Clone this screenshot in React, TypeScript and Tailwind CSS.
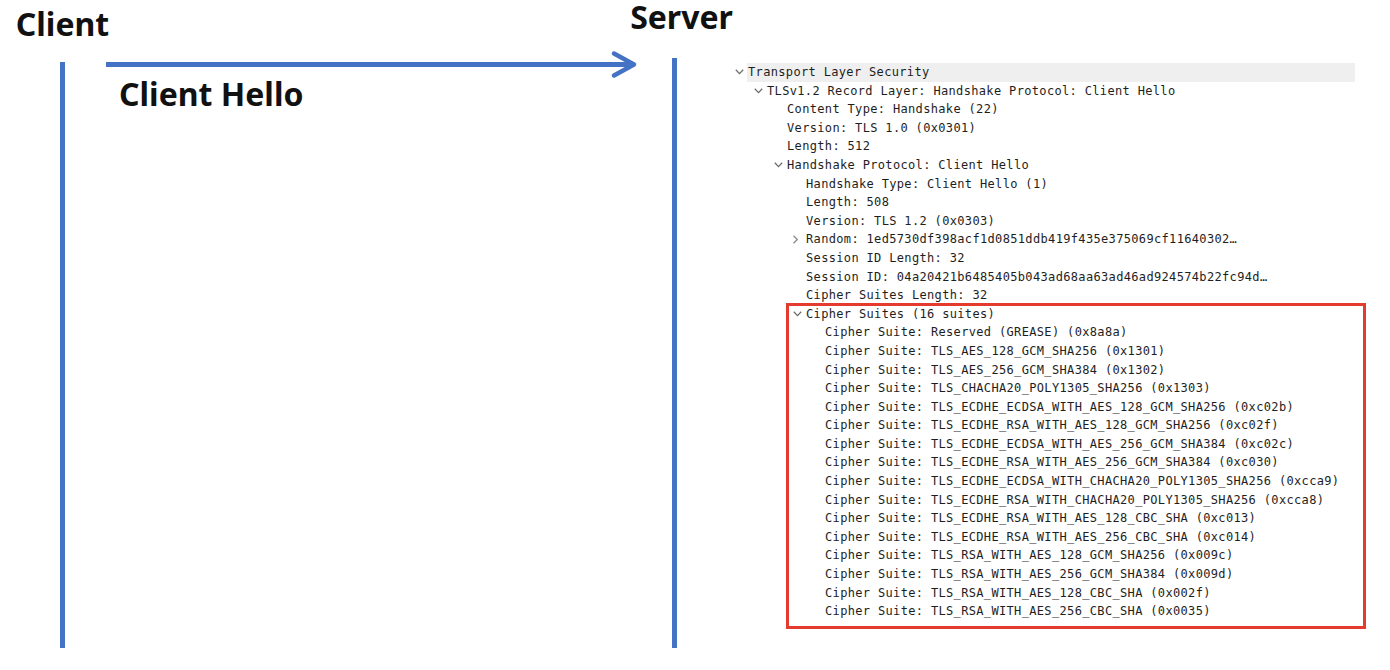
import React from "react";

type Row = { level: number; text: string; chevron?: "down" | "right"; hl?: boolean };

const rows: Row[] = [
  { level: 0, text: "Transport Layer Security", chevron: "down", hl: true },
  { level: 1, text: "TLSv1.2 Record Layer: Handshake Protocol: Client Hello", chevron: "down" },
  { level: 2, text: "Content Type: Handshake (22)" },
  { level: 2, text: "Version: TLS 1.0 (0x0301)" },
  { level: 2, text: "Length: 512" },
  { level: 2, text: "Handshake Protocol: Client Hello", chevron: "down" },
  { level: 3, text: "Handshake Type: Client Hello (1)" },
  { level: 3, text: "Length: 508" },
  { level: 3, text: "Version: TLS 1.2 (0x0303)" },
  { level: 3, text: "Random: 1ed5730df398acf1d0851ddb419f435e375069cf11640302…", chevron: "right" },
  { level: 3, text: "Session ID Length: 32" },
  { level: 3, text: "Session ID: 04a20421b6485405b043ad68aa63ad46ad924574b22fc94d…" },
  { level: 3, text: "Cipher Suites Length: 32" },
];

const suites = [
  "Reserved (GREASE) (0x8a8a)",
  "TLS_AES_128_GCM_SHA256 (0x1301)",
  "TLS_AES_256_GCM_SHA384 (0x1302)",
  "TLS_CHACHA20_POLY1305_SHA256 (0x1303)",
  "TLS_ECDHE_ECDSA_WITH_AES_128_GCM_SHA256 (0xc02b)",
  "TLS_ECDHE_RSA_WITH_AES_128_GCM_SHA256 (0xc02f)",
  "TLS_ECDHE_ECDSA_WITH_AES_256_GCM_SHA384 (0xc02c)",
  "TLS_ECDHE_RSA_WITH_AES_256_GCM_SHA384 (0xc030)",
  "TLS_ECDHE_ECDSA_WITH_CHACHA20_POLY1305_SHA256 (0xcca9)",
  "TLS_ECDHE_RSA_WITH_CHACHA20_POLY1305_SHA256 (0xcca8)",
  "TLS_ECDHE_RSA_WITH_AES_128_CBC_SHA (0xc013)",
  "TLS_ECDHE_RSA_WITH_AES_256_CBC_SHA (0xc014)",
  "TLS_RSA_WITH_AES_128_GCM_SHA256 (0x009c)",
  "TLS_RSA_WITH_AES_256_GCM_SHA384 (0x009d)",
  "TLS_RSA_WITH_AES_128_CBC_SHA (0x002f)",
  "TLS_RSA_WITH_AES_256_CBC_SHA (0x0035)",
];

const indent = ["pl-[0px]", "pl-[19px]", "pl-[39px]", "pl-[58px]", "pl-[77px]"];

function Chevron({ dir }: { dir?: "down" | "right" }) {
  return (
    <span className="w-[13px] shrink-0 flex items-center">
      {dir === "down" && (
        <svg width="9" height="6" viewBox="0 0 9 6">
          <polyline points="0.8,0.8 4.5,4.6 8.2,0.8" fill="none" stroke="#6b6b6b" strokeWidth="1.3" />
        </svg>
      )}
      {dir === "right" && (
        <svg width="9" height="9" viewBox="0 0 9 9" className="-ml-[2px]">
          <polyline points="2.5,0.8 6.3,4.5 2.5,8.2" fill="none" stroke="#8a8a8a" strokeWidth="1.3" />
        </svg>
      )}
    </span>
  );
}

function TreeRow({ r }: { r: Row }) {
  return (
    <div className={`flex h-[18.6px] items-center ${indent[r.level]}`}>
      <Chevron dir={r.chevron} />
      <span
        className={`flex-1 whitespace-pre h-[18.6px] leading-[18.6px] ${
          r.hl ? "bg-[#efefef] pl-[1px] -ml-[1px]" : ""
        }`}
      >
        {r.text}
      </span>
    </div>
  );
}

export default function App() {
  return (
    <div className="w-[1390px] h-[670px] bg-white flex overflow-hidden">
      {/* Sequence diagram */}
      <div className="w-[735px] h-full shrink-0 flex font-['Noto_Sans',sans-serif] font-bold text-[32px] leading-[32px] text-[#111]">
        {/* Client lifeline */}
        <div className="w-[125px] shrink-0 flex flex-col items-center pt-[8px] pb-[22px]">
          <div>Client</div>
          <div className="mt-[22px] w-[5px] flex-1 bg-[#4472c4]" />
        </div>

        {/* Message */}
        <div className="-ml-[19px] flex-1 min-w-0 flex flex-col">
          <svg className="mt-[52px] overflow-visible shrink-0" width="531" height="24" viewBox="0 0 531 24">
            <line x1="0" y1="12.5" x2="526" y2="12.5" stroke="#4472c4" strokeWidth="5" />
            <polyline
              points="508,1.5 528,12.5 508,23.5"
              fill="none"
              stroke="#4472c4"
              strokeWidth="4.5"
              strokeLinecap="round"
              strokeLinejoin="round"
            />
          </svg>
          <div className="mt-[2px] pl-[13px] whitespace-nowrap">Client Hello</div>
        </div>

        {/* Server lifeline */}
        <div className="w-[110px] shrink-0 flex flex-col items-center pt-[1px] pb-[22px]">
          <div className="pl-[3px]">Server</div>
          <div className="mt-[25px] mr-[11px] w-[5px] flex-1 bg-[#4472c4]" />
        </div>
      </div>

      {/* Packet details tree */}
      <div className="w-[620px] pt-[63px] font-['DejaVu_Sans_Mono',monospace] text-[12px] tracking-[0.34px] text-[#1e1e1e]">
        {rows.map((r, i) => (
          <TreeRow key={i} r={r} />
        ))}
        <div className="relative">
          <TreeRow r={{ level: 3, text: "Cipher Suites (16 suites)", chevron: "down" }} />
          {suites.map((s, i) => (
            <TreeRow key={i} r={{ level: 4, text: `Cipher Suite: ${s}` }} />
          ))}
          <div className="absolute left-[51px] top-[-2px] w-[580px] bottom-[-8px] border-[3px] border-[#e53a2e] pointer-events-none" />
        </div>
      </div>
    </div>
  );
}
